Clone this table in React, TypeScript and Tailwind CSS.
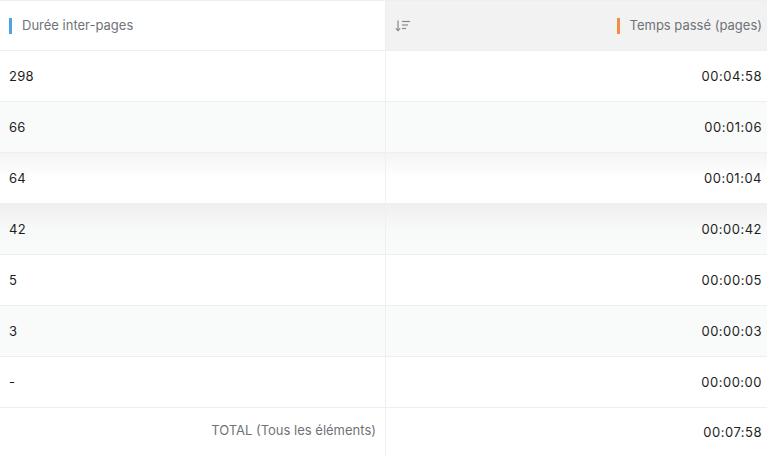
import React from "react";

const rows = [
  { label: "298", time: "00:04:58", bg: "bg-white" },
  { label: "66", time: "00:01:06", bg: "bg-[#f9fafa]" },
  { label: "64", time: "00:01:04", bg: "bg-gradient-to-b from-[#f4f4f4] via-white to-white" },
  { label: "42", time: "00:00:42", bg: "bg-gradient-to-b from-[#efefef] via-[#f8f9f9] to-[#f9fafa]" },
  { label: "5", time: "00:00:05", bg: "bg-white" },
  { label: "3", time: "00:00:03", bg: "bg-[#f9fafa]" },
  { label: "-", time: "00:00:00", bg: "bg-white" },
];

function SortIcon() {
  return (
    <svg width="16" height="12" viewBox="0 0 16 12" fill="none" stroke="#8a8a8a" strokeWidth="1.2">
      <path d="M3 0.5V10.5" />
      <path d="M0.8 8.3L3 10.6L5.2 8.3" />
      <path d="M7 1.5H15" />
      <path d="M7 5H13" />
      <path d="M7 8.5H11" />
    </svg>
  );
}

export default function App() {
  return (
    <div className="w-[767px] h-[456px] overflow-hidden bg-white text-[13px] font-['Inter','Liberation_Sans',sans-serif]">
      {/* Header */}
      <div className="grid grid-cols-[386px_381px] h-[51px] border-t border-b border-[#efefef]">
        <div className="flex items-center pl-[9px] border-r border-[#efefef]">
          <span className="w-[3px] h-4 bg-[#4ba3e8]" />
          <span className="ml-[10px] text-[#6f7378]">Durée inter-pages</span>
        </div>
        <div className="flex items-center justify-between bg-[#f2f2f2] pl-[9px] pr-[5px]">
          <SortIcon />
          <div className="flex items-center">
            <span className="w-[3px] h-4 bg-[#f58c45]" />
            <span className="ml-[10px] text-[#6f7378]">Temps passé (pages)</span>
          </div>
        </div>
      </div>

      {rows.map((r) => (
        <div key={r.label} className={`grid grid-cols-[386px_381px] h-[51px] border-b border-[#efefef] ${r.bg}`}>
          <div className="flex items-center pl-[9px] pt-px border-r border-[#efefef] text-[#1e1e1e] tracking-[0.3px]">{r.label}</div>
          <div className="flex items-center justify-end pr-[5px] pt-px text-[#1e1e1e] tracking-[0.5px]">{r.time}</div>
        </div>
      ))}

      {/* Total */}
      <div className="grid grid-cols-[386px_381px] h-[49px]">
        <div className="flex items-center justify-end pr-[9px] border-r border-[#efefef] text-[#6f7378] -mt-[3px]">
          TOTAL (Tous les éléments)
        </div>
        <div className="flex items-center justify-end pr-[5px] pt-px text-[#1e1e1e] tracking-[0.5px]">00:07:58</div>
      </div>
    </div>
  );
}
